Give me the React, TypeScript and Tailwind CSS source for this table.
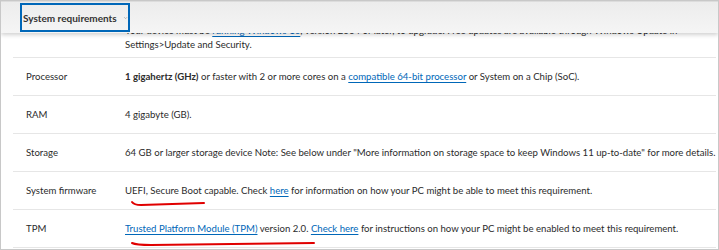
import { ChevronDown } from "lucide-react";

const font = { fontFamily: 'Lato, "Noto Sans", sans-serif' };

function Link({ children }: { children: React.ReactNode }) {
  return <a className="text-[#0067b8] underline underline-offset-2">{children}</a>;
}

const rows: { label: string; value: React.ReactNode }[] = [
  {
    label: "Processor",
    value: (
      <>
        <b className="font-bold">1 gigahertz (GHz)</b> or faster with 2 or more cores on a{" "}
        <Link>compatible 64-bit processor</Link> or System on a Chip (SoC).
      </>
    ),
  },
  { label: "RAM", value: "4 gigabyte (GB)." },
  {
    label: "Storage",
    value:
      '64 GB or larger storage device Note: See below under "More information on storage space to keep Windows 11 up-to-date" for more details.',
  },
  {
    label: "System firmware",
    value: (
      <>
        UEFI, Secure Boot capable. Check <Link>here</Link> for information on how your PC might be able to meet this requirement.
      </>
    ),
  },
  {
    label: "TPM",
    value: (
      <>
        <Link>Trusted Platform Module (TPM)</Link> version 2.0. <Link>Check here</Link> for instructions on how your PC might be enabled to meet this requirement.
      </>
    ),
  },
];

export default function App() {
  return (
    <div
      className="relative w-[719px] h-[250px] overflow-hidden bg-white border border-[#c8c8c8] text-[9.6px] leading-[14px] text-[#2b2b2b]"
      style={font}
    >
      <div className="pl-3 pr-0.5">
        <div className="flex border-b border-[#e6e6e6] pt-[23px] pb-[5px]">
          <div className="w-[112px] shrink-0" />
          <div className="whitespace-nowrap">
            Your device must be <Link>running Windows 10</Link>, version 2004 or later, to upgrade. Free updates are available through Windows Update in
            <br />
            Settings&gt;Update and Security.
          </div>
        </div>
        {rows.map((r) => (
          <div key={r.label} className="flex items-center h-[38px] border-b border-[#e6e6e6]">
            <div className="w-[112px] shrink-0 pl-[13px]">{r.label}</div>
            <div className="whitespace-nowrap">{r.value}</div>
          </div>
        ))}
      </div>

      <div className="absolute left-0 right-0 top-0 h-[32px] bg-gradient-to-b from-[#ececec] to-[#f5f5f5] border-t border-[#dcdcdc] shadow-[0_2px_4px_rgba(0,0,0,0.18)]">
        <div className="ml-[19px] mt-[1px] h-[29px] w-[110px] border-2 border-[#0067b8] flex items-center pl-[1px] gap-1.5 font-bold text-[10px] text-[#333] whitespace-nowrap">
          System requirements
          <ChevronDown size={10} strokeWidth={1.5} className="text-[#555]" />
        </div>
      </div>

      <svg className="absolute left-0 top-0 pointer-events-none" width="719" height="250">
        <path d="M131 201 Q133 204 140 204 L203 202" stroke="#e00000" strokeWidth="2" fill="none" strokeLinecap="round" />
        <path d="M131 242 Q135 244 150 244 L313 242" stroke="#e00000" strokeWidth="2" fill="none" strokeLinecap="round" />
      </svg>
    </div>
  );
}
